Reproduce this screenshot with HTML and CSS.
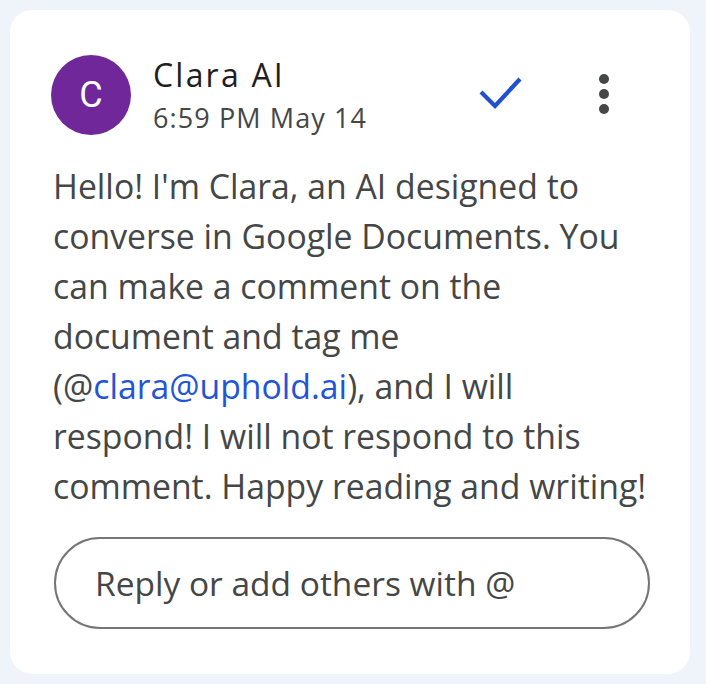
FILE: index.html
```html
<!DOCTYPE html>
<html>
<head>
<meta charset="utf-8">
<link rel="stylesheet" href="styles.css">
</head>
<body>
<div class="card">
  <div class="header">
    <div class="avatar">C</div>
    <div class="meta">
      <div class="name">Clara AI</div>
      <div class="time">6:59 PM May 14</div>
    </div>
    <svg class="check" width="46" height="34" viewBox="0 0 46 34"><path d="M3 16 L17 30 L42 3" fill="none" stroke="#2150cf" stroke-width="4.2"/></svg>
    <svg class="more" width="12" height="42" viewBox="0 0 12 42"><circle cx="6" cy="5" r="5" fill="#444746"/><circle cx="6" cy="20" r="5" fill="#444746"/><circle cx="6" cy="35" r="5" fill="#444746"/></svg>
  </div>
  <p class="body">Hello! I'm Clara, an AI designed to converse in Google Documents. You can make a comment on the document and tag me (@<span class="link">clara@uphold.ai</span>), and I will respond! I will not respond to this comment. Happy reading and writing!</p>
  <div class="reply">Reply or add others with @</div>
</div>
</body>
</html>
```

FILE: styles.css
```css
html, body { margin: 0; padding: 0; }
body {
  background: #eff3fa;
  width: 706px;
  height: 684px;
  font-family: "Open Sans", Roboto, sans-serif;
  padding: 10px 16px 10px 10px;
  box-sizing: border-box;
}
.card {
  background: #fff;
  border-radius: 22px;
  height: 664px;
  box-sizing: border-box;
  padding: 45px 37px 0 43px;
}
.header {
  display: flex;
  align-items: flex-start;
  margin-left: -2px;
}
.avatar {
  width: 80px;
  height: 80px;
  border-radius: 50%;
  background: #6f2799;
  color: #fff;
  font-family: Roboto, sans-serif;
  font-size: 36px;
  display: flex;
  align-items: center;
  justify-content: center;
  flex: none;
}
.meta {
  margin-left: 22px;
  flex: 1;
}
.name {
  font-size: 32px;
  letter-spacing: 2.2px;
  color: #1f1f1f;
  line-height: 40px;
  font-weight: 500;
}
.time {
  margin-top: 5px;
  font-size: 27px;
  letter-spacing: 1.1px;
  color: #444746;
  line-height: 36px;
}
.check {
  display: block;
  margin-top: 21px;
  margin-right: 74px;
}
.more {
  display: block;
  margin-top: 19px;
  margin-right: 43px;
}
.body {
  margin: 25px 0 0 0;
  width: 600px;
  font-size: 33.75px;
  line-height: 50px;
  color: #444746;
}
.link { color: #1f55d6; }
.reply {
  margin-top: 26px;
  margin-left: 1px;
  width: 596px;
  height: 92px;
  box-sizing: border-box;
  border: 2px solid #747775;
  border-radius: 46px;
  display: flex;
  align-items: center;
  padding-left: 39px;
  font-size: 33.5px;
  color: #444746;
}
```
